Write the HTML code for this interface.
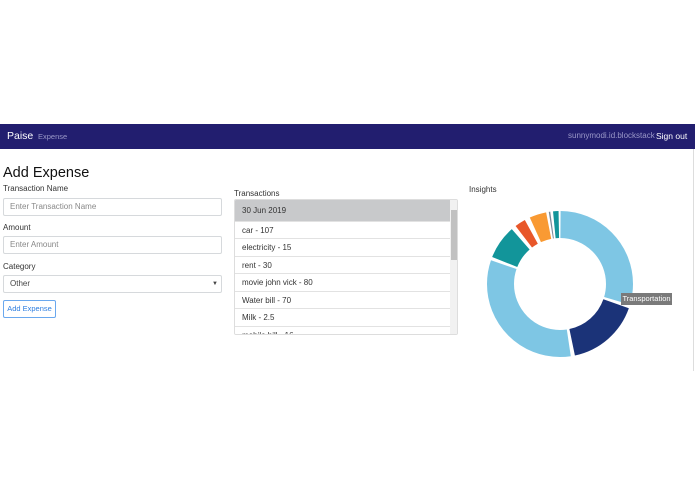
<!DOCTYPE html><html><head><style>
body{margin:0;width:695px;height:494px;background:#fff;font-family:"Liberation Sans",sans-serif;position:relative;overflow:hidden;color:#212529}
.a{position:absolute}
.nav{left:0;top:124px;width:695px;height:25px;background:#221e6f}
.lbl{font-size:8px;color:#333}
.inp{border:1px solid #d6d9dc;border-radius:2px;height:16px;left:3px;width:217px;font-size:8px;color:#888;line-height:16px;padding-left:6px;box-sizing:content-box}
.row{position:absolute;left:0;width:215px;height:17px;border-top:1px solid #e2e2e2;font-size:8px;line-height:17px;padding-left:7px;box-sizing:border-box;color:#333;background:#fff}
</style></head><body>
<div class="a nav"></div>
<div class="a" style="left:7px;top:130px;font-size:10.5px;color:#fff">Paise</div>
<div class="a" style="left:38px;top:132px;font-size:7.5px;color:#9a98c8">Expense</div>
<div class="a" style="left:568px;top:131px;font-size:8px;color:#9a98c8">sunnymodi.id.blockstack</div>
<div class="a" style="left:656px;top:131px;font-size:8.5px;color:#fff">Sign out</div>
<div class="a" style="left:693px;top:149px;width:1px;height:222px;background:#ddd"></div>
<div class="a" style="left:3px;top:165px;font-size:14.5px;color:#111">Add Expense</div>
<div class="a lbl" style="left:3px;top:184px">Transaction Name</div>
<div class="a inp" style="top:198px;width:211px">Enter Transaction Name</div>
<div class="a lbl" style="left:3px;top:223px">Amount</div>
<div class="a inp" style="top:236px;width:211px">Enter Amount</div>
<div class="a lbl" style="left:3px;top:262px">Category</div>
<div class="a inp" style="top:275px;width:211px;color:#444">Other<span style="position:absolute;right:3px;font-size:6px">▼</span></div>
<div class="a" style="left:3px;top:300px;width:51px;height:16px;border:1px solid #6aa8ee;border-radius:2px;font-size:7.5px;color:#2f7fe0;line-height:16px;text-align:center">Add Expense</div>
<div class="a lbl" style="left:234px;top:189px">Transactions</div>
<div class="a" style="left:234px;top:199px;width:222px;height:134px;border:1px solid #ddd;border-radius:2px;overflow:hidden">
<div class="row" style="top:0;height:21px;line-height:21px;background:#c8c9cb;border:0;width:215px">30 Jun 2019</div>
<div class="row" style="top:21px">car - 107</div>
<div class="row" style="top:38px">electricity - 15</div>
<div class="row" style="top:56px">rent - 30</div>
<div class="row" style="top:73px">movie john vick - 80</div>
<div class="row" style="top:91px">Water bill - 70</div>
<div class="row" style="top:108px">Milk - 2.5</div>
<div class="row" style="top:126px">mobile bill - 16</div>
<div class="a" style="left:215px;top:0;width:8px;height:134px;background:#f1f1f1"></div>
<div class="a" style="left:216px;top:10px;width:6px;height:50px;background:#c1c1c1"></div>
</div>
<div class="a lbl" style="left:469px;top:185px">Insights</div>
<svg class="a" style="left:480px;top:204px" width="160" height="160" viewBox="0 0 160 160">
<g transform="rotate(-90 80 80)" fill="none" stroke-width="27">
<circle cx="80" cy="80" r="59.5" stroke="#7ec6e4" stroke-dasharray="110 400" stroke-dashoffset="-0.5"/>
<circle cx="80" cy="80" r="59.5" stroke="#1b3378" stroke-dasharray="61 400" stroke-dashoffset="-113.6"/>
<circle cx="80" cy="80" r="59.5" stroke="#7ec6e4" stroke-dasharray="122 400" stroke-dashoffset="-178"/>
<circle cx="80" cy="80" r="59.5" stroke="#12959a" stroke-dasharray="28 400" stroke-dashoffset="-302.8"/>
<circle cx="80" cy="80" r="59.5" stroke="#e8572a" stroke-dasharray="9 400" stroke-dashoffset="-334.8"/>
<circle cx="80" cy="80" r="59.5" stroke="#f99a33" stroke-dasharray="14 400" stroke-dashoffset="-348.3"/>
<circle cx="80" cy="80" r="59.5" stroke="#7a8a9a" stroke-dasharray="1.2 400" stroke-dashoffset="-364.5"/>
<circle cx="80" cy="80" r="59.5" stroke="#12959a" stroke-dasharray="4.5 400" stroke-dashoffset="-368"/>
</g></svg>
<div class="a" style="left:621px;top:293px;width:51px;height:12px;background:#7a7a7a;color:#fff;font-size:7.5px;line-height:12px;text-align:center">Transportation</div>
</body></html>
